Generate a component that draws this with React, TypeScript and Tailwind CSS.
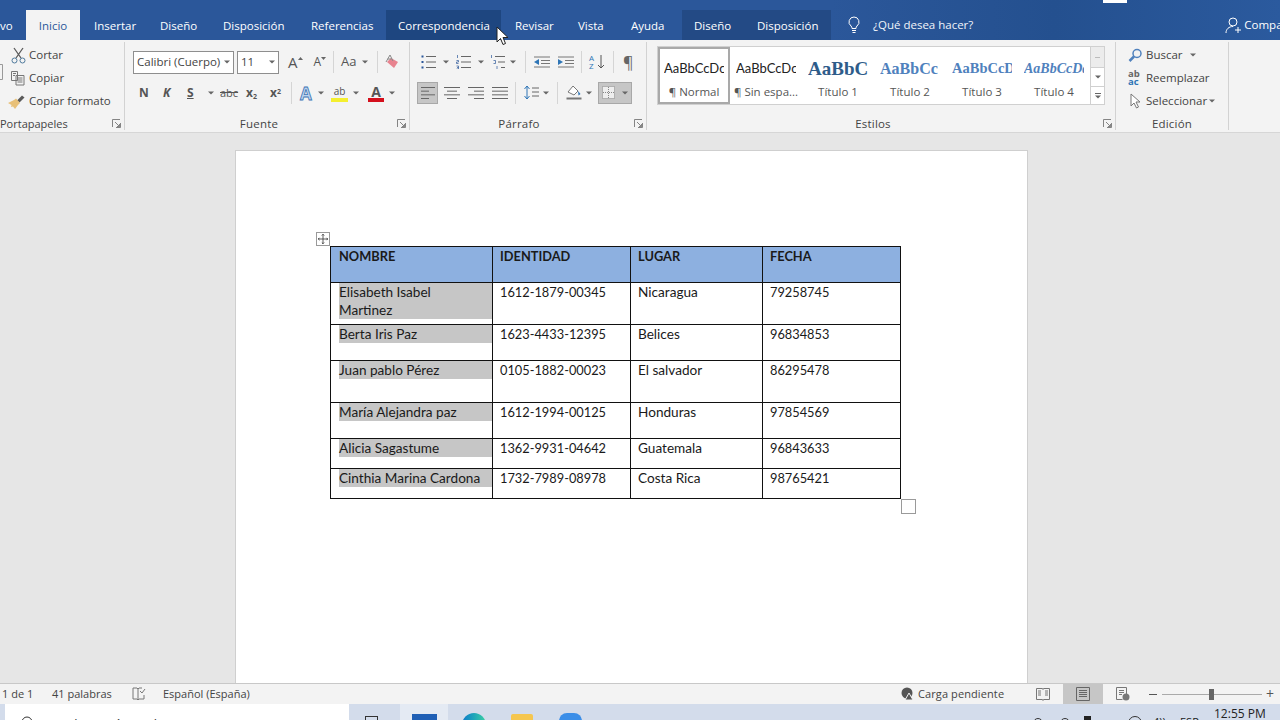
import { ReactNode } from "react";

const segoe = "font-['Open_Sans','Noto_Sans',sans-serif]";

const Icon = ({ w = 16, h = 16, className = "", children }: { w?: number; h?: number; className?: string; children: ReactNode }) => (
  <svg width={w} height={h} viewBox={`0 0 ${w} ${h}`} fill="none" className={`shrink-0 ${className}`}>
    {children}
  </svg>
);

const Chevron = ({ className = "" }: { className?: string }) => (
  <svg width="6" height="4" viewBox="0 0 6 4" className={`shrink-0 ${className}`}>
    <path d="M0 0.5h6L3 3.5z" fill="#666" />
  </svg>
);

const Launcher = () => (
  <svg width="9" height="9" viewBox="0 0 9 9" className="absolute right-[3px] bottom-[2px]" fill="none" stroke="#777">
    <path d="M0.5 8V0.5H8M8.5 4v4.500H4M3 3l4.500 4.500M7.500 5v2.500H5" strokeWidth="0.9" />
  </svg>
);

const Sep = ({ className = "" }: { className?: string }) => <div className={`w-px h-[22px] bg-[#d5d5d5] shrink-0 ${className}`} />;

const Lines = ({ rows, w = 16 }: { rows: [number, number][]; w?: number }) => (
  <Icon w={w} h={14}>
    {rows.map(([x1, x2], i) => (
      <path key={i} d={`M${x1} ${1.5 + (i * 11) / (rows.length - 1)}H${x2}`} stroke="#666" strokeWidth="1" />
    ))}
  </Icon>
);

const Group = ({ label, w, labelClass = "text-center", launcher = true, children }: { label: string; w: string; labelClass?: string; launcher?: boolean; children: ReactNode }) => (
  <div className={`relative flex flex-col shrink-0 h-[88px] mt-[2px] border-r border-[#d2d2d2] ${w}`}>
    <div className="flex-1 min-h-0">{children}</div>
    <div className={`h-[13px] text-[11.5px] leading-[13px] text-[#444] tracking-[0.2px] whitespace-nowrap ${labelClass}`}>{label}</div>
    {launcher && <Launcher />}
  </div>
);

const tabs = [
  { label: "Insertar", cls: "ml-[14px] w-[66px]" },
  { label: "Diseño", cls: "w-[63px]" },
  { label: "Disposición", cls: "w-[88px]" },
  { label: "Referencias", cls: "w-[75px]" },
  { label: "Correspondencia", cls: "w-[115px] pl-[12px] bg-[#1e4680]" },
  { label: "Revisar", cls: "pl-[14px] w-[77px]" },
  { label: "Vista", cls: "w-[53px]" },
  { label: "Ayuda", cls: "w-[51px]" },
  { label: "Diseño", cls: "pl-[12px] w-[75px] bg-[#234a85]" },
  { label: "Disposición", cls: "w-[74px] bg-[#234a85]" },
];

const styles = [
  { sample: "AaBbCcDc", name: "¶ Normal", cls: "text-[13px] text-[#222] font-['Lato',sans-serif]", active: true },
  { sample: "AaBbCcDc", name: "¶ Sin espa...", cls: "text-[13px] text-[#222] font-['Lato',sans-serif]" },
  { sample: "AaBbCc", name: "Título 1", cls: "text-[19px] font-bold text-[#2e5c8a] font-['Liberation_Serif',serif]" },
  { sample: "AaBbCc", name: "Título 2", cls: "text-[16px] font-bold text-[#4f81bd] font-['Liberation_Serif',serif]" },
  { sample: "AaBbCcDd", name: "Título 3", cls: "text-[14.5px] font-bold text-[#4f81bd] font-['Liberation_Serif',serif]" },
  { sample: "AaBbCcDd", name: "Título 4", cls: "text-[14px] font-bold italic text-[#4f81bd] font-['Liberation_Serif',serif]" },
];

const rows = [
  { h: "h-[42px]", name: "Elisabeth Isabel Martinez", id: "1612-1879-00345", place: "Nicaragua", date: "79258745" },
  { h: "h-[36px]", name: "Berta Iris Paz", id: "1623-4433-12395", place: "Belices", date: "96834853" },
  { h: "h-[42px]", name: "Juan pablo Pérez", id: "0105-1882-00023", place: "El salvador", date: "86295478" },
  { h: "h-[36px]", name: "María Alejandra paz", id: "1612-1994-00125", place: "Honduras", date: "97854569" },
  { h: "h-[30px]", name: "Alicia Sagastume", id: "1362-9931-04642", place: "Guatemala", date: "96843633" },
  { h: "h-[30px]", name: "Cinthia Marina Cardona", id: "1732-7989-08978", place: "Costa Rica", date: "98765421" },
];

const cell = "border border-[#111] align-top pl-[7px] pr-0 pt-0 leading-[18px] text-[#1a1a1a]";

export default function App() {
  return (
    <div className={`relative w-[1280px] h-[720px] overflow-hidden flex flex-col bg-[#e6e6e6] ${segoe}`}>
      {/* title + tabs */}
      <div className="relative h-[40px] shrink-0 bg-[#2b579a] text-white text-[11.5px]">
        <div className="absolute top-0 left-[830px] w-[450px] h-[40px] bg-gradient-to-r from-[#2b579a] via-[#24508f] to-[#2b5a9e]" />
        <div className="absolute top-0 left-[1103px] w-[24px] h-[3px] bg-white" />
        <div className="relative flex items-end h-full">
          <div className="w-[26px] shrink-0 h-[30px] leading-[31px] text-right pr-[15px] overflow-hidden">vo</div>
          <div className="w-[54px] shrink-0 h-[30px] leading-[31px] text-center bg-[#f3f3f3] text-[#2b579a]">Inicio</div>
          {tabs.map((t, i) => (
            <div key={i} className={`h-[30px] shrink-0 leading-[31px] whitespace-nowrap ${t.cls}`}>
              {t.label}
            </div>
          ))}
          <div className="flex items-center shrink-0 h-[30px] pl-[16px] gap-[12px]">
            <Icon w={14} h={18}>
              <path d="M7 1a5 5 0 0 0-3 9c.8.7 1 1.500 1 2.500h4c0-1 .2-1.800 1-2.500a5 5 0 0 0-3-9zM5 14.500h4M5.500 16.500h3" stroke="#fff" strokeWidth="1" />
            </Icon>
            <span className="text-[#f0f4fa] whitespace-nowrap">¿Qué desea hacer?</span>
          </div>
          <div className="flex items-center shrink-0 h-[30px] ml-[252px] gap-[2px]">
            <Icon w={17} h={18}>
              <circle cx="8" cy="6" r="4" stroke="#fff" />
              <path d="M1 17c0-4 3-6.500 7-6.500M10 14h6M13 11v6" stroke="#fff" />
            </Icon>
            <span className="whitespace-nowrap">Compa</span>
          </div>
        </div>
      </div>

      {/* ribbon */}
      <div className="flex h-[93px] shrink-0 bg-[#f3f3f3] border-b border-[#d6d6d6] text-[11.5px] text-[#444]">
        <Group label="Portapapeles" w="w-[125px]" labelClass="text-left !text-[11px] !tracking-normal">
          <svg width="3" height="16" viewBox="0 0 3 16" className="absolute left-0 top-[22px]" fill="none" stroke="#999">
            <path d="M0 .5h2.500v15H0" />
          </svg>
          <div className="flex flex-col pl-[11px] pt-[2px] gap-[1px]">
            <div className="flex items-center gap-[3px] h-[22px]">
              <Icon w={15} h={17}>
                <path d="M3 1l7 10M12 1L5 11" stroke="#5a5a5a" strokeWidth="1.300" />
                <circle cx="3.500" cy="13.500" r="2.500" stroke="#4f7a9c" />
                <circle cx="11.500" cy="13.500" r="2.500" stroke="#4f7a9c" />
              </Icon>
              <span>Cortar</span>
            </div>
            <div className="flex items-center gap-[3px] h-[22px]">
              <Icon w={15} h={15}>
                <path d="M0.500 0.500h6v9h-6zM5 4.500h8v9.500H5zM6.500 7h5M6.500 9h5M6.500 11h5M2 2.500h3M2 4.500h2" stroke="#777" fill="#f3f3f3" />
              </Icon>
              <span>Copiar</span>
            </div>
            <div className="flex items-center gap-[3px] h-[22px]">
              <Icon w={18} h={15} className="-ml-[3px]">
                <path d="M9 6.500L14 1.500l2.500 2-5 5z" fill="#5a5a5a" />
                <path d="M0 9l6-3 2-1.500 4 4.500-2 2-3 4-2-2.500-2 .5 .5-2z" fill="#e8c078" />
              </Icon>
              <span className="whitespace-nowrap">Copiar formato</span>
            </div>
          </div>
        </Group>

        <Group label="Fuente" w="w-[285px]" labelClass="text-center pr-[16px]">
          <div className="pl-[8px] pt-[9px]">
            <div className="flex items-center h-[22px]">
              <div className="flex items-center justify-between w-[101px] h-[23px] border border-[#8e8e8e] bg-white pl-[3px] pr-[3px] whitespace-nowrap">
                Calibri (Cuerpo)
                <Chevron />
              </div>
              <div className="flex items-center justify-between w-[42px] h-[23px] ml-[3px] border border-[#8e8e8e] bg-white pl-[3px] pr-[3px]">
                11
                <Chevron />
              </div>
              <span className="ml-[9px] text-[15px] text-[#555] leading-none">A</span>
              <svg width="5" height="3" viewBox="0 0 5 3" className="mb-[8px]"><path d="M0 3h5L2.500 0z" fill="#666" /></svg>
              <span className="ml-[11px] text-[12px] text-[#555] leading-none">A</span>
              <svg width="5" height="3" viewBox="0 0 5 3" className="mb-[8px]"><path d="M0 0h5L2.500 3z" fill="#666" /></svg>
              <Sep className="ml-[7px]" />
              <span className="ml-[7px] text-[13px] text-[#555]">Aa</span>
              <Chevron className="ml-[5px]" />
              <Sep className="ml-[9px]" />
              <Icon w={15} h={16} className="ml-[7px]">
                <path d="M2 8l4-4 7 4-4 6z" fill="#e8838f" />
                <path d="M5 1L1 8M5 1l3 6M2.500 5h4" stroke="#888" />
              </Icon>
            </div>
            <div className="flex items-center h-[22px] mt-[9px] text-[#555]">
              <span className="ml-[6px] w-[10px] font-bold text-[12px]">N</span>
              <span className="ml-[14px] w-[9px] font-bold italic text-[12px]">K</span>
              <span className="ml-[15px] w-[10px] font-bold underline text-[12px]">S</span>
              <Chevron className="ml-[11px]" />
              <span className="ml-[6px] w-[17px] text-[11px] line-through">abc</span>
              <span className="ml-[9px] w-[15px] font-bold text-[12px]">x<sub className="text-[7px]">2</sub></span>
              <span className="ml-[9px] w-[14px] font-bold text-[12px]">x<sup className="text-[7px]">2</sup></span>
              <Sep className="ml-[7px]" />
              <span className="ml-[8px] w-[15px] text-[17px] leading-none font-bold text-[#bcd3ee] [-webkit-text-stroke:0.8px_#3f76b5]">A</span>
              <Chevron className="ml-[3px]" />
              <div className="ml-[7px] w-[17px] flex flex-col items-center">
                <span className="h-[13px] text-[10px] leading-[13px] text-[#555]">ab</span>
                <div className="w-[17px] h-[4px] bg-[#f4ef2f]" />
              </div>
              <Chevron className="ml-[5px]" />
              <div className="ml-[9px] w-[16px] flex flex-col items-center">
                <span className="text-[14px] leading-[13px] font-bold text-[#555]">A</span>
                <div className="w-[16px] h-[4px] bg-[#d40f1c]" />
              </div>
              <Chevron className="ml-[5px]" />
            </div>
          </div>
        </Group>

        <Group label="Párrafo" w="w-[237px]" labelClass="text-center pr-[18px]">
          <div className="pt-[9px]">
            <div className="flex items-center h-[22px] pl-[11px]">
              <Icon w={16} h={14}>
                <path d="M5 1.500h10M5 7h10M5 12.500h10" stroke="#666" />
                <path d="M0.500 0.500h2v2h-2zM0.500 6h2v2h-2zM0.500 11.500h2v2h-2z" fill="#2b579a" />
              </Icon>
              <Chevron className="ml-[6px]" />
              <div className="w-[7px]" />
              <Icon w={16} h={14}>
                <path d="M5 1.500h10M5 7h10M5 12.500h10" stroke="#666" />
                <path d="M1.500 0v3M0.500 5.500h2v1.500h-2v1.500h2M0.500 11h2v3h-2M1 12.500h1.500" stroke="#2b579a" strokeWidth="0.7" />
              </Icon>
              <Chevron className="ml-[6px]" />
              <div className="w-[6px]" />
              <Icon w={16} h={14}>
                <path d="M5 1.500h10M8 7h7M11 12.500h4" stroke="#666" />
                <path d="M1.500 0v3M3.500 5.500h2v3h-2M7 11v3" stroke="#2b579a" strokeWidth="0.7" />
              </Icon>
              <Chevron className="ml-[4px]" />
              <Sep className="ml-[9px]" />
              <div className="w-[8px]" />
              <Icon w={16} h={14}>
                <path d="M0 2h16M7 5.500h9M7 8.500h9M0 12h16" stroke="#777" />
                <path d="M0 7l5-3v6z" fill="#2e75b6" />
              </Icon>
              <div className="w-[8px]" />
              <Icon w={16} h={14}>
                <path d="M0 2h16M7 5.500h9M7 8.500h9M0 12h16" stroke="#777" />
                <path d="M5 7L0 4v6z" fill="#2e75b6" />
              </Icon>
              <Sep className="ml-[7px]" />
              <span className="ml-[7px] w-[8px] text-[8px] leading-[8px] text-[#2e75b6]">A<br />Z</span>
              <Icon w={8} h={16}>
                <path d="M4 1v13M1 11l3 3 3-3" stroke="#555" />
              </Icon>
              <Sep className="ml-[8px]" />
              <span className="ml-[9px] text-[16px] leading-none text-[#666]">¶</span>
            </div>
            <div className="flex items-center h-[23px] mt-[8px] pl-[7px]">
              <div className="w-[21px] h-[22px] bg-[#c6c6c6] border border-[#a8a8a8] flex items-center justify-center">
                <Lines rows={[[1, 15], [1, 9], [1, 15], [1, 9]]} />
              </div>
              <div className="w-[6px]" />
              <Lines rows={[[0, 16], [3, 13], [0, 16], [3, 13]]} />
              <div className="w-[8px]" />
              <Lines rows={[[0, 16], [6, 16], [0, 16], [6, 16]]} />
              <div className="w-[8px]" />
              <Lines rows={[[0, 16], [0, 16], [0, 16], [0, 16]]} />
              <Sep className="ml-[7px]" />
              <Icon w={15} h={16} className="ml-[8px]">
                <path d="M3 1v13M0.500 4L3 1l2.500 3M0.500 11L3 14l2.500-3" stroke="#2e75b6" />
                <path d="M8 3h7M8 7h7M8 11h7" stroke="#666" />
              </Icon>
              <Chevron className="ml-[4px]" />
              <Sep className="ml-[8px]" />
              <Icon w={16} h={17} className="ml-[8px]">
                <path d="M2 8l5-6 5 5-4 4z" fill="#fff" stroke="#777" />
                <path d="M12 7l2.500 3-2 1.500z" fill="#2e75b6" />
                <path d="M0.500 14.500h15" stroke="#777" strokeWidth="2" />
              </Icon>
              <Chevron className="ml-[4px]" />
              <div className="ml-[6px] w-[34px] h-[22px] bg-[#c6c6c6] border border-[#a8a8a8] flex items-center pl-[3px] gap-[7px]">
                <Icon w={13} h={13}>
                  <rect x="0.500" y="0.500" width="12" height="12" fill="#eee" stroke="#888" strokeDasharray="1 1" />
                  <path d="M6.500 1v11M1 6.500h11" stroke="#888" strokeDasharray="1 1" />
                </Icon>
                <Chevron className="" />
              </div>
            </div>
          </div>
        </Group>

        <Group label="Estilos" w="w-[469px]" labelClass="text-center pr-[16px]">
          <div className="flex pl-[10px] pt-[4px]">
            <div className="flex w-[433px] h-[59px] bg-white border border-[#d0d0d0] border-r-0">
              {styles.map((s) => (
                <div
                  key={s.name}
                  className={`w-[72px] h-[57px] shrink-0 flex flex-col items-center overflow-hidden border-2 ${s.active ? "border-[#a9a9a9]" : "border-transparent"}`}
                >
                  <div className={`h-[31px] w-[60px] mt-[4px] overflow-hidden whitespace-nowrap leading-[31px] text-left ${s.cls}`}>{s.sample}</div>
                  <div className="text-[11.5px] leading-[16px] text-[#555] whitespace-nowrap">{s.name}</div>
                </div>
              ))}
            </div>
            <div className="flex flex-col w-[15px] h-[59px] border border-[#d0d0d0] bg-white">
              <div className="h-[21px] bg-[#ececec] flex items-center justify-center border-b border-[#d0d0d0]">
                <div className="w-[5px] h-px bg-[#bbb]" />
              </div>
              <div className="h-[19px] flex items-center justify-center border-b border-[#d0d0d0]">
                <Chevron />
              </div>
              <div className="flex-1 flex flex-col items-center justify-center gap-[1px]">
                <div className="w-[6px] h-px bg-[#666]" />
                <Chevron />
              </div>
            </div>
          </div>
        </Group>

        <Group label="Edición" w="w-[113px]" launcher={false}>
          <div className="flex flex-col pl-[12px] pt-[2px] gap-[1px]">
            <div className="flex items-center gap-[4px] h-[22px]">
              <Icon w={14} h={15}>
                <circle cx="9" cy="5.500" r="4" stroke="#4f81bd" strokeWidth="1.500" />
                <path d="M6 8.500L1.500 13" stroke="#4f81bd" strokeWidth="2.500" />
              </Icon>
              <span>Buscar</span>
              <Chevron className="ml-[3px]" />
            </div>
            <div className="flex items-center gap-[3px] h-[22px]">
              <span className="w-[15px] text-[9.5px] leading-[8px] text-[#666] font-bold">ab<br /><span className="text-[#2e75b6]">ac</span></span>
              <span>Reemplazar</span>
            </div>
            <div className="flex items-center gap-[3px] h-[22px]">
              <Icon w={15} h={17}>
                <path d="M3 1v12l3-3 2.500 5 2-1L8 9h4z" fill="#fff" stroke="#777" />
              </Icon>
              <span className="whitespace-nowrap">Seleccionar</span>
              <Chevron className="-ml-[1px]" />
            </div>
          </div>
        </Group>
      </div>

      {/* document */}
      <div className="flex-1 min-h-0 overflow-hidden pl-[235px] pt-[17px]">
        <div className="relative w-[793px] h-[700px] bg-white border border-[#cfcfcf] pl-[94px] pt-[95px]">
          <div className="absolute left-[80px] top-[81px] w-[14px] h-[14px] bg-white border border-[#9a9a9a] flex items-center justify-center">
            <svg width="10" height="10" viewBox="0 0 10 10" fill="none" stroke="#333" strokeWidth="0.8">
              <path d="M5 0v10M0 5h10M3.800 1.500L5 .3l1.200 1.200M3.800 8.500L5 9.700l1.200-1.200M1.500 3.800L.3 5l1.200 1.200M8.500 3.800L9.700 5 8.500 6.200" />
            </svg>
          </div>
          <table className="table-fixed border-collapse w-[570px] font-['Lato',sans-serif]">
            <colgroup>
              <col className="w-[162px]" />
              <col className="w-[138px]" />
              <col className="w-[132px]" />
              <col className="w-[138px]" />
            </colgroup>
            <thead>
              <tr className="h-[36px] bg-[#8db0e0]">
                {["NOMBRE", "IDENTIDAD", "LUGAR", "FECHA"].map((c, i) => (
                  <th key={c} className={`${cell} ${i === 0 ? "!pl-[8px]" : ""} text-left font-bold text-[12.8px]`}>
                    {c}
                  </th>
                ))}
              </tr>
            </thead>
            <tbody>
              {rows.map((r) => (
                <tr key={r.name} className={r.h}>
                  <td className={`${cell} !pl-0 text-[13.6px]`}>
                    <div className="ml-[8px] pr-[8px] bg-[#c6c6c6]">{r.name}</div>
                  </td>
                  <td className={`${cell} text-[12.8px]`}>{r.id}</td>
                  <td className={`${cell} text-[13.6px]`}>{r.place}</td>
                  <td className={`${cell} text-[12.8px]`}>{r.date}</td>
                </tr>
              ))}
            </tbody>
          </table>
          <div className="absolute left-[665px] top-[348px] w-[15px] h-[15px] bg-white border border-[#9a9a9a]" />
        </div>
      </div>

      {/* status bar */}
      <div className="flex items-center h-[21px] shrink-0 bg-[#f3f3f3] border-t border-[#c8c8c8] text-[11px] text-[#444] whitespace-nowrap">
        <span className="ml-[2px] w-[50px]">1 de 1</span>
        <span className="w-[80px]">41 palabras</span>
        <Icon w={15} h={15}>
          <path d="M1 1h4l1 1 1-1h3M1 1v11h4l1 1 1-1h5V8M6 2v11" stroke="#777" />
          <path d="M8 4l2 2 3-4" stroke="#777" />
        </Icon>
        <span className="ml-[16px] w-[738px]">Español (España)</span>
        <Icon w={14} h={14}>
          <circle cx="6" cy="6" r="5.500" fill="#555" />
          <path d="M8 6l4 7H4z" fill="#555" stroke="#f3f3f3" />
        </Icon>
        <span className="ml-[3px] w-[118px] tracking-[0.1px]">Carga pendiente</span>
        <Icon w={14} h={14}>
          <path d="M0.500 1.500h6l.5 1 .5-1h6v11h-6l-.5 1-.5-1h-6zM2 4h3M2 6h3M2 8h3M9 4h3M9 6h3M9 8h3" stroke="#777" />
        </Icon>
        <div className="ml-[13px] w-[40px] h-[21px] bg-[#c6c6c6] flex items-center justify-center">
          <Icon w={14} h={14}>
            <path d="M0.500 0.500h13v13h-13zM3 3.500h8M3 5.500h8M3 7.500h8M3 9.500h8" stroke="#666" />
          </Icon>
        </div>
        <Icon w={14} h={14} className="ml-[13px]">
          <path d="M0.500 0.500h10v8M0.500 0.500v12h6M3 3.500h5M3 5.500h5M3 7.500h3" stroke="#777" />
          <circle cx="10" cy="10" r="3.500" fill="#777" />
        </Icon>
        <div className="ml-[19px] w-[8px] h-px bg-[#555]" />
        <div className="relative ml-[5px] w-[100px] h-px bg-[#aaa]">
          <div className="absolute left-[47px] -top-[5px] w-[5px] h-[11px] bg-[#666]" />
        </div>
        <span className="ml-[4px] text-[14px] leading-none text-[#555]">+</span>
      </div>

      {/* taskbar */}
      <div className="relative h-[16px] shrink-0 bg-[#d3dceb] flex items-start overflow-hidden">
        <div className="ml-[5px] w-[344px] h-[16px] bg-white flex items-start pl-[16px] pt-[12px] gap-[13px] shrink-0">
          <svg width="12" height="12" viewBox="0 0 12 12" fill="none" stroke="#333" className="shrink-0"><circle cx="6" cy="6" r="5" /></svg>
          <span className="text-[13px] leading-[16px] text-[#333] whitespace-nowrap">Escriba aquí para buscar</span>
        </div>
        <div className="ml-[16px] mt-[12px] w-[13px] h-[4px] border-t border-x border-[#333]" />
        <div className="ml-[22px] w-[48px] h-[16px] bg-[#e4eaf3] flex justify-center pt-[10px]">
          <div className="w-[25px] h-[10px] bg-[#1f5fb5]" />
        </div>
        <div className="ml-[14px] mt-[9px] w-[24px] h-[24px] rounded-full bg-gradient-to-r from-[#1479c9] to-[#3dd0a0]" />
        <div className="ml-[25px] mt-[10px] w-[22px] h-[14px] bg-[#f5c64f] rounded-t-[2px]" />
        <div className="ml-[26px] mt-[9px] w-[23px] h-[16px] bg-[#3b8ee8] rounded-t-[8px]" />
        {/* tray */}
        <div className="absolute left-[1033px] top-[14px] w-[10px] h-[10px] rounded-full border border-[#333]" />
        <div className="absolute left-[1060px] top-[14px] w-[10px] h-[10px] rounded-full border border-[#333]" />
        <div className="absolute left-[1084px] top-[12px] w-[7px] h-[6px] bg-[#222]" />
        <div className="absolute left-[1128px] top-[12px] w-[14px] h-[14px] rounded-full border border-[#333]" />
        <div className="absolute left-[1153px] top-[11px] text-[11px] leading-[14px] text-[#222] whitespace-nowrap">4))</div>
        <div className="absolute left-[1180px] top-[11px] text-[11px] leading-[14px] text-[#222] whitespace-nowrap">ESP</div>
        <div className="absolute left-[1214px] top-[3px] text-[12px] leading-[14px] text-[#222] whitespace-nowrap">12:55 PM</div>
      </div>

      {/* cursor */}
      <svg width="14" height="21" viewBox="0 0 14 21" className="absolute left-[496px] top-[26px]">
        <path d="M1 1v15l3.500-3.500 2.500 6 2.500-1-2.500-6H12z" fill="#fff" stroke="#222" strokeWidth="1" />
      </svg>
    </div>
  );
}
